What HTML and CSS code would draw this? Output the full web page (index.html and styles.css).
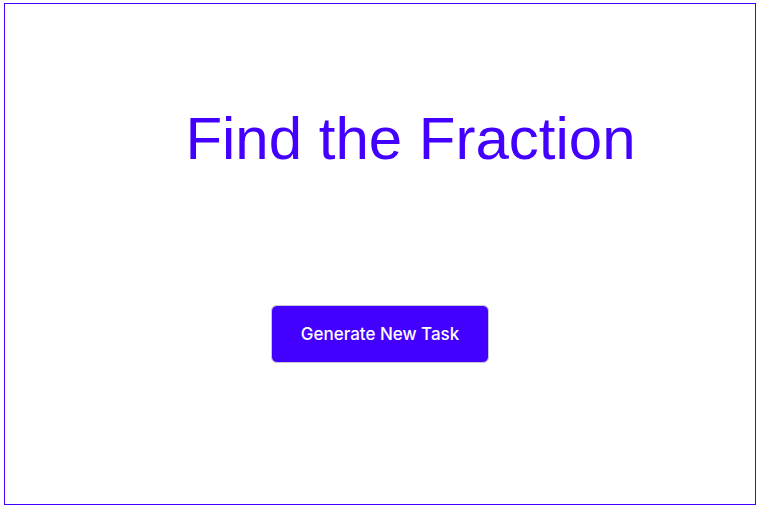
FILE: index.html
```html
<!DOCTYPE html>
<html>
<head>
<meta charset="utf-8">
<link rel="stylesheet" href="styles.css">
</head>
<body>
<main class="frame">
  <h1 class="title">Find the Fraction</h1>
  <button class="generate">Generate New Task</button>
</main>
</body>
</html>
```
FILE: styles.css
```css
html, body {
  margin: 0;
  padding: 0;
  background: #fff;
}
.frame {
  box-sizing: border-box;
  margin: 3px 5px 0 4px;
  height: 502px;
  border: 1px solid #4400ff;
  display: flex;
  flex-direction: column;
  align-items: center;
}
.title {
  margin: 100px 0 0 61px;
  font-family: "Liberation Sans", Arial, sans-serif;
  font-weight: 400;
  font-size: 60px;
  line-height: 69px;
  color: #4400ff;
}
.generate {
  margin-top: 132px;
  box-sizing: border-box;
  width: 218px;
  height: 58px;
  border: 1px solid #c8c8d0;
  border-radius: 6px;
  background: #4400ff;
  color: #fff;
  font-family: Inter, "Noto Sans", sans-serif;
  font-weight: 500;
  font-size: 17px;
  padding: 0;
}
```
